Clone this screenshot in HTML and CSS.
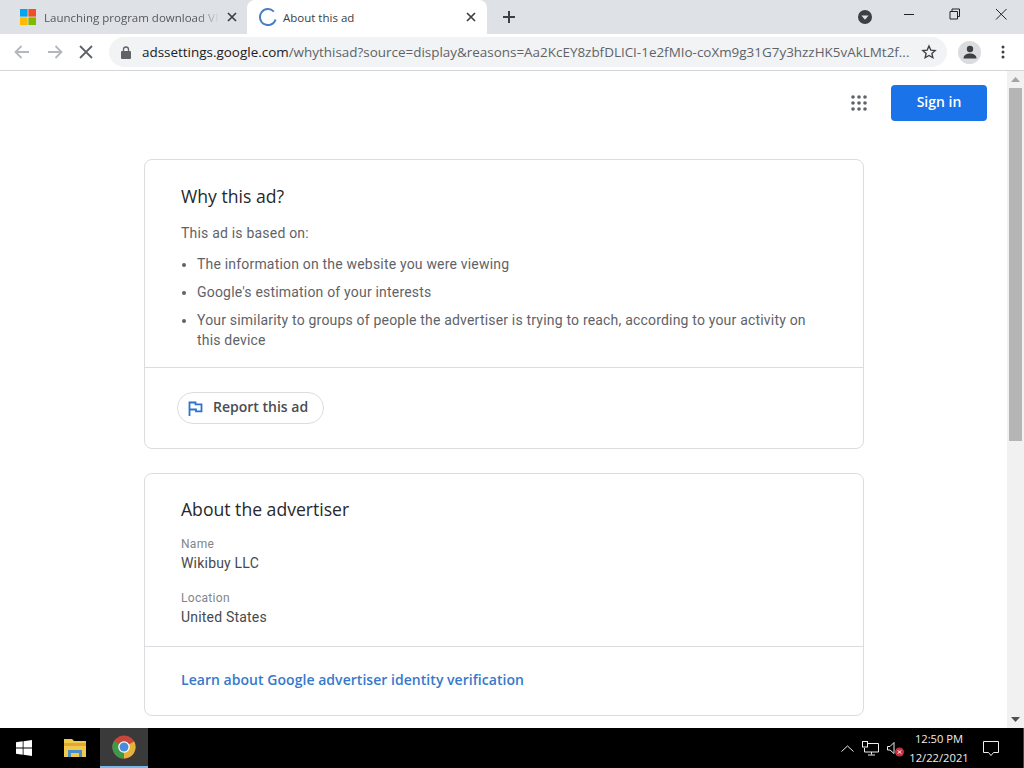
FILE: index.html
```html
<!DOCTYPE html>
<html lang="en">
<head>
<meta charset="utf-8">
<title>About this ad</title>
<link rel="stylesheet" href="styles.css">
</head>
<body>
<div class="window">
  <div class="tabstrip">
    <div class="tab tab-inactive">
      <svg class="favicon" width="16" height="16" viewBox="0 0 16 16"><rect x="8.4" y="8.4" width="7.6" height="7.6" fill="#7fba00"/><rect y="8.4" width="7.6" height="7.6" fill="#ffb900"/><rect width="7.6" height="7.6" fill="#00a4ef"/><rect x="8.4" width="7.6" height="7.6" fill="#f25022"/></svg>
      <span class="tab-title tab-title-fade">Launching program download VPN</span>
      <svg class="tab-close" width="10" height="10" viewBox="0 0 10 10"><path d="M1 1l8 8M9 1l-8 8" stroke="#3c4043" stroke-width="1.7" fill="none"/></svg>
    </div>
    <div class="tab tab-active">
      <svg class="favicon" width="18" height="18" viewBox="0 0 18 18"><path d="M14.8 3.6A8 8 0 1 0 16.6 11.5" stroke="#4a7fc4" stroke-width="2" fill="none"/></svg>
      <span class="tab-title">About this ad</span>
      <svg class="tab-close" width="10" height="10" viewBox="0 0 10 10"><path d="M1 1l8 8M9 1l-8 8" stroke="#3c4043" stroke-width="1.7" fill="none"/></svg>
    </div>
    <svg class="newtab" width="12" height="12" viewBox="0 0 12 12"><path d="M6 0v12M0 6h12" stroke="#3c4043" stroke-width="2" fill="none"/></svg>
    <div class="strip-spacer"></div>
    <svg class="tabsearch" width="16" height="16" viewBox="0 0 16 16"><circle cx="8" cy="8" r="7" fill="#3c4043"/><path d="M4.4 6.4h7.2L8 10.8z" fill="#dee1e6"/></svg>
    <div class="winbtns">
      <svg width="46" height="30" viewBox="0 0 46 30"><path d="M18 14.5h10" stroke="#222" fill="none"/></svg>
      <svg width="46" height="30" viewBox="0 0 46 30"><path d="M18 11.5h7.500v7.500h-7.500zM20 11.500v-2.500h7.500v7.500h-2" stroke="#222" fill="none"/></svg>
      <svg width="46" height="30" viewBox="0 0 46 30"><path d="M18 9l10.500 10.500M28.500 9L18 19.500" stroke="#222" fill="none"/></svg>
    </div>
  </div>

  <div class="toolbar">
    <svg class="navicon" width="16" height="14" viewBox="0 0 16 14"><path d="M15 7H2M7.500 1L1.500 7l6 6" stroke="#b4b7bb" stroke-width="1.800" fill="none"/></svg>
    <svg class="navicon" width="16" height="14" viewBox="0 0 16 14"><path d="M1 7h13M8.500 1l6 6-6 6" stroke="#b4b7bb" stroke-width="1.800" fill="none"/></svg>
    <svg class="navicon" width="14" height="14" viewBox="0 0 14 14"><path d="M1 1l12 12M13 1L1 13" stroke="#5f6368" stroke-width="1.800" fill="none"/></svg>
    <div class="omnibox">
      <svg class="lock" width="10" height="13" viewBox="0 0 10 13"><path d="M2.500 5V3.500a2.500 2.500 0 0 1 5 0V5" stroke="#5f6368" stroke-width="1.300" fill="none"/><rect y="5" width="10" height="8" rx="1" fill="#5f6368"/></svg>
      <span class="url"><span class="url-host">adssettings.google.com</span>/whythisad?source=display&amp;reasons=Aa2KcEY8zbfDLICI-1e2fMIo-coXm9g31G7y3hzzHK5vAkLMt2f...</span>
      <svg class="star" width="16" height="16" viewBox="0 0 24 24"><path d="M12 3l2.700 6.100 6.600.6-5 4.400 1.500 6.500L12 17.200l-5.800 3.400 1.500-6.500-5-4.400 6.600-.6z" stroke="#3c4043" stroke-width="2" fill="none"/></svg>
    </div>
    <div class="avatar"><svg width="14" height="14" viewBox="0 0 14 14"><circle cx="7" cy="4" r="3.200" fill="#3c4043"/><path d="M0.500 13.500c0-3.500 3-5 6.500-5s6.500 1.500 6.500 5z" fill="#3c4043"/></svg></div>
    <svg class="kebab" width="4" height="14" viewBox="0 0 4 14"><circle cx="2" cy="2" r="1.500" fill="#3c4043"/><circle cx="2" cy="7" r="1.500" fill="#3c4043"/><circle cx="2" cy="12" r="1.500" fill="#3c4043"/></svg>
  </div>

  <div class="viewport">
    <main class="page">
      <header class="page-header">
        <svg class="apps" width="16" height="16" viewBox="0 0 16 16"><g fill="#5f6368"><circle cx="2" cy="2" r="1.800"/><circle cx="8" cy="2" r="1.800"/><circle cx="14" cy="2" r="1.800"/><circle cx="2" cy="8" r="1.800"/><circle cx="8" cy="8" r="1.800"/><circle cx="14" cy="8" r="1.800"/><circle cx="2" cy="14" r="1.800"/><circle cx="8" cy="14" r="1.800"/><circle cx="14" cy="14" r="1.800"/></g></svg>
        <button class="signin">Sign in</button>
      </header>

      <section class="card card-why">
        <div class="card-body why-body">
          <h2 class="card-title">Why this ad?</h2>
          <p class="lead">This ad is based on:</p>
          <ul class="reasons">
            <li>The information on the website you were viewing</li>
            <li>Google's estimation of your interests</li>
            <li>Your similarity to groups of people the advertiser is trying to reach, according to your activity on this device</li>
          </ul>
        </div>
        <div class="card-foot report-foot">
          <div class="report">
            <svg width="15" height="15" viewBox="0 0 15 15"><path d="M1.500 15V1.500h6v1.800h6v7h-5.500V8.500H1.500" stroke="#2b74cc" stroke-width="1.800" fill="none"/></svg>
            <span class="report-label">Report this ad</span>
          </div>
        </div>
      </section>

      <section class="card card-about">
        <div class="card-body about-body">
          <h2 class="card-title">About the advertiser</h2>
          <div class="field field-name">
            <div class="label">Name</div>
            <div class="value">Wikibuy LLC</div>
          </div>
          <div class="field">
            <div class="label">Location</div>
            <div class="value">United States</div>
          </div>
        </div>
        <div class="card-foot learn-foot">
          <a class="learn" href="#">Learn about Google advertiser identity verification</a>
        </div>
      </section>
    </main>
    <div class="scrollbar">
      <div class="sb-arrow"><svg width="9" height="5" viewBox="0 0 9 5"><path d="M0 5L4.500 0 9 5z" fill="#a3a3a3"/></svg></div>
      <div class="sb-thumb"></div>
      <div class="sb-track"></div>
      <div class="sb-arrow"><svg width="9" height="5" viewBox="0 0 9 5"><path d="M0 0l4.500 5L9 0z" fill="#505050"/></svg></div>
    </div>
  </div>

  <footer class="taskbar">
    <div class="tb-btn tb-start"><svg width="16" height="16" viewBox="0 0 16 16"><path d="M0 2.300l6.700-1v6.300H0zM7.500 1.200L16 0v7.600H7.500zM0 8.400h6.700v6.300l-6.700-1zM7.500 8.400H16V16l-8.500-1.200z" fill="#fff"/></svg></div>
    <div class="tb-btn tb-files"><svg width="22" height="20" viewBox="0 0 22 20"><path d="M0 1h8l2 2h12v16H0z" fill="#f2c94c"/><path d="M0 5h22v3H0z" fill="#e0a92e"/><path d="M4 19v-7h14v7h-3v-4H7v4z" fill="#4a90c8"/></svg></div>
    <div class="tb-btn tb-chrome"><svg width="24" height="24" viewBox="0 0 24 24"><circle cx="12" cy="12" r="11.500" fill="#c9463a"/><path d="M12 12L2 18a11.500 11.500 0 0 0 10 5.500z" fill="#3d9a4b"/><path d="M2 18A11.500 11.500 0 0 1 2.100 6.100L12 12z" fill="#3d9a4b"/><path d="M12 12l10.200-5.500A11.500 11.500 0 0 1 12 23.500z" fill="#e3b33a"/><circle cx="12" cy="12" r="5.800" fill="#fff"/><circle cx="12" cy="12" r="4.500" fill="#4a8cdc"/></svg></div>
    <div class="tb-spacer"></div>
    <div class="tray">
      <svg width="13" height="7" viewBox="0 0 13 7"><path d="M0.500 6.500l6-5.500 6 5.500" stroke="#eee" fill="none"/></svg>
      <svg width="17" height="15" viewBox="0 0 17 15"><path d="M5.500 2.500h11v8.500h-14V7M9.500 11v2.500M6 14h7" stroke="#eee" fill="none"/><rect x="0.500" y="0.500" width="5" height="5.500" fill="#000" stroke="#eee"/></svg>
      <svg class="speaker" width="20" height="18" viewBox="0 0 20 18"><path d="M0.500 6.500h2.500l4-4v11l-4-3.500H0.500z" stroke="#eee" fill="none"/><circle cx="12.500" cy="12" r="4.500" fill="#c8303f"/><path d="M10.800 10.300l3.400 3.400M14.200 10.300l-3.400 3.400" stroke="#fff" fill="none"/></svg>
    </div>
    <div class="clock"><div>12:50 PM</div><div>12/22/2021</div></div>
    <svg class="notif" width="16" height="15" viewBox="0 0 16 15"><path d="M0.500 0.500h15v11h-5l-2.500 3-2.500-3h-5z" stroke="#eee" fill="none"/></svg>
    <div class="tb-edge"></div>
  </footer>
</div>
</body>
</html>
```

FILE: styles.css
```css
* { box-sizing: border-box; }
html, body { margin: 0; padding: 0; height: 100%; overflow: hidden; background: #fff; }
svg { display: block; flex: none; }
.window { width: 1024px; height: 768px; display: flex; flex-direction: column; font-family: Roboto, sans-serif; }

.tabstrip { height: 34px; background: #dee1e6; display: flex; align-items: center; flex: none; }
.tab { height: 34px; display: flex; align-items: center; font-family: "Open Sans", "Noto Sans", sans-serif; font-size: 11.5px; color: #3c4043; }
.tab-inactive { width: 247px; padding: 0 10px 0 20px; }
.tab-active { width: 240px; background: #fff; border-radius: 8px 8px 0 0; padding: 0 11px 0 12px; }
.tab-title { flex: 1; min-width: 0; margin-left: 8px; white-space: nowrap; overflow: hidden; }
.tab-active .tab-title { margin-left: 4px; padding-left: 2px; }
.tab-inactive .tab-title { color: #55585c; }
.tab-title-fade { -webkit-mask-image: linear-gradient(to right, #000 88%, transparent 100%); mask-image: linear-gradient(to right, #000 88%, transparent 100%); margin-right: 8px; }
.newtab { margin-left: 16px; }
.strip-spacer { flex: 1; }
.tabsearch { margin-right: 13px; }
.winbtns { display: flex; align-self: flex-start; }

.toolbar { height: 37px; background: #fff; border-bottom: 1px solid #d4d6d9; display: flex; align-items: center; padding: 0 0 0 14px; flex: none; }
.navicon { margin-right: 17px; }
.navicon:nth-child(2) { margin-right: 16px; }
.navicon:nth-child(3) { margin-right: 16px; }
.omnibox { width: 838px; height: 30px; background: #f1f3f4; border-radius: 15px; display: flex; align-items: center; padding: 0 10px 0 12px; }
.lock { margin-right: 11px; }
.url { flex: 1; min-width: 0; white-space: nowrap; overflow: hidden; font-family: "Open Sans", "Noto Sans", sans-serif; font-size: 13.45px; color: #5f6368; }
.url-host { color: #202124; }
.star { margin-left: 11px; }
.avatar { width: 23px; height: 23px; border-radius: 50%; background: #dadce0; display: flex; align-items: center; justify-content: center; margin-left: 11px; }
.kebab { margin-left: 20px; }

.viewport { height: 657px; display: flex; flex: none; overflow: hidden; }
.page { flex: 1; min-width: 0; overflow: hidden; background: #fff; padding: 0 20px 0 144px; }
.page-header { height: 88px; display: flex; justify-content: flex-end; align-items: flex-start; padding-top: 14px; }
.apps { margin: 10px 24px 0 0; }
.signin { width: 96px; height: 36px; background: #1a73e8; color: #fff; border: 0; border-radius: 4px; font-family: "Open Sans", Roboto, sans-serif; font-size: 14px; font-weight: 600; padding: 0 0 3px; }

.card { width: 720px; background: #fff; border: 1px solid #dadce0; border-radius: 8px; }
.card-why { height: 290px; margin-bottom: 24px; }
.card-about { height: 243px; }
.card-body { border-bottom: 1px solid #dadce0; padding: 0 36px; }
.why-body { height: 208px; padding-top: 24px; }
.about-body { height: 173px; padding-top: 23px; }
.card-title { margin: 0; font-family: "Open Sans", Roboto, sans-serif; font-size: 17.6px; font-weight: 400; line-height: 24px; color: #26282b; }
.lead { margin: 15px 0 0; font-size: 14px; line-height: 20px; letter-spacing: .2px; color: #5f6368; }
.reasons { margin: 11px 0 0; padding: 0 0 0 16px; font-size: 14px; line-height: 20px; letter-spacing: .19px; color: #5f6368; }
.reasons li { margin-bottom: 8px; }
.reasons li:last-child { margin-bottom: 0; }
.report-foot { padding: 24px 32px; }
.report { width: 147px; height: 32px; border: 1px solid #dadce0; border-radius: 16px; display: flex; align-items: center; gap: 10px; padding-left: 10px; font-family: "Open Sans", Roboto, sans-serif; font-size: 14px; font-weight: 600; color: #4a4d51; }
.report-label { padding-bottom: 3px; }
.field-name { margin-top: 15px; }
.field { margin-bottom: 17px; }
.label { font-size: 12px; line-height: 16px; letter-spacing: .3px; color: #80868b; }
.value { font-size: 14px; line-height: 20px; letter-spacing: .2px; color: #46494d; margin-top: 1px; }
.learn-foot { padding: 23px 36px; }
.learn { font-family: "Open Sans", Roboto, sans-serif; font-size: 14px; font-weight: 600; line-height: 20px; letter-spacing: .04px; color: #3579cc; text-decoration: none; }

.scrollbar { width: 17px; background: #f1f1f1; display: flex; flex-direction: column; flex: none; }
.sb-arrow { height: 17px; display: flex; align-items: center; justify-content: center; flex: none; }
.sb-thumb { height: 353px; margin-left: 2px; width: 13px; background: #b5b5b5; flex: none; }
.sb-track { flex: 1; }

.taskbar { height: 40px; background: #000; display: flex; align-items: center; flex: none; position: relative; }
.tb-btn { height: 40px; display: flex; align-items: center; justify-content: center; }
.tb-start { width: 48px; }
.tb-files { width: 52px; padding-left: 2px; }
.tb-chrome { width: 48px; background: #3a3a3a; border-bottom: 2px solid #76b9ed; }
.tb-spacer { flex: 1; }
.tray { display: flex; align-items: center; gap: 8px; }
.speaker { margin-top: 2px; }
.clock { width: 64px; text-align: center; font-family: "Open Sans", "Noto Sans", sans-serif; font-size: 11.2px; line-height: 19px; color: #eee; }
.notif { margin: 0 25px 0 12px; }
.tb-edge { position: absolute; right: 0; top: 0; bottom: 0; width: 1px; background: #444; }
```
